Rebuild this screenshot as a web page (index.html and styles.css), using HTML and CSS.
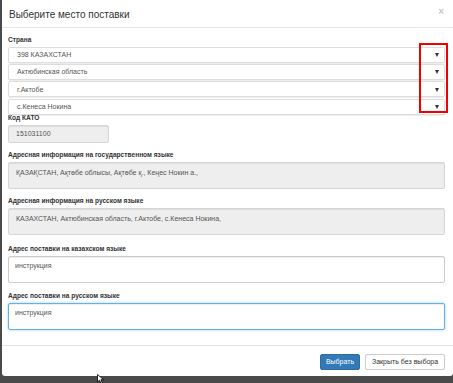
FILE: index.html
```html
<!DOCTYPE html>
<html lang="ru">
<head>
<meta charset="utf-8">
<title>Выберите место поставки</title>
<link rel="stylesheet" href="styles.css">
</head>
<body>
<div class="modal">
  <div class="modal-header">
    <span class="modal-title">Выберите место поставки</span>
    <span class="close">×</span>
  </div>
  <div class="modal-body">
    <div class="group g-country">
      <div class="lbl">Страна</div>
      <div class="selects">
        <div class="select"><span>398 КАЗАХСТАН</span><i class="caret"></i></div>
        <div class="select"><span>Актюбинская область</span><i class="caret"></i></div>
        <div class="select"><span>г.Актобе</span><i class="caret"></i></div>
        <div class="select"><span>с.Кенеса Нокина</span><i class="caret"></i></div>
        <div class="highlight"></div>
      </div>
    </div>
    <div class="group g-kato">
      <div class="lbl">Код КАТО</div>
      <div class="input disabled kato">151031100</div>
    </div>
    <div class="group g-kz">
      <div class="lbl">Адресная информация на государственном языке</div>
      <div class="area disabled">ҚАЗАҚСТАН, Ақтөбе облысы, Ақтөбе қ., Кеңес Нокин а.,</div>
    </div>
    <div class="group g-ru">
      <div class="lbl">Адресная информация на русском языке</div>
      <div class="area disabled">КАЗАХСТАН, Актюбинская область, г.Актобе, с.Кенеса Нокина,</div>
    </div>
    <div class="group g-dkz">
      <div class="lbl">Адрес поставки на казахском языке</div>
      <div class="area">инструкция</div>
    </div>
    <div class="group g-dru">
      <div class="lbl">Адрес поставки на русском языке</div>
      <div class="area focus">инструкция</div>
    </div>
  </div>
  <div class="modal-footer">
    <button class="btn btn-primary">Выбрать</button>
    <button class="btn btn-default">Закрыть без выбора</button>
  </div>
</div>
<svg class="cursor" width="8" height="10" viewBox="0 0 8 10"><path d="M0.5 0.5 L0.5 8 L2.5 6.2 L4 9.3 L5.3 8.7 L3.9 5.7 L6.6 5.7 Z" fill="#fff" stroke="#000" stroke-width="0.8"/></svg>
</body>
</html>
```
FILE: styles.css
```css
html, body {
  margin: 0;
  padding: 0;
}
body {
  width: 453px;
  height: 383px;
  background: #4a4a4a;
  font-family: "Liberation Sans", Arial, sans-serif;
  color: #333;
  position: relative;
  overflow: hidden;
}
.modal {
  margin-left: 2px;
  width: 451px;
  background: #fff;
  border-radius: 0 0 3px 3px;
}
.modal-header {
  height: 27px;
  border-bottom: 1px solid #e5e5e5;
  display: flex;
  align-items: center;
  justify-content: space-between;
  padding: 0 9px 0 7px;
}
.modal-title {
  font-size: 10px;
  color: #333;
  position: relative;
  top: 1px;
}
.close {
  font-size: 10px;
  font-weight: bold;
  color: #c8c8c8;
  line-height: 1;
  position: relative;
  top: -2px;
}
.modal-body {
  padding: 8px 8px 15.5px 6px;
}
.lbl {
  font-size: 6.6px;
  font-weight: bold;
  line-height: 8px;
  margin-bottom: 3px;
  color: #333;
  white-space: nowrap;
}
.group { margin-bottom: 8px; }
.g-country { margin-bottom: 0; }
.g-country .lbl { margin-bottom: 2.7px; }
.g-kz { margin-bottom: 8px; }
.g-ru { margin-bottom: 10px; }
.g-dkz { margin-bottom: 9px; }
.g-dru { margin-bottom: 0; }

.selects {
  position: relative;
  display: flex;
  flex-direction: column;
  gap: 1.3px;
  margin-bottom: -0.5px;
}
.select {
  height: 16px;
  box-sizing: border-box;
  border: 1px solid #ddd;
  border-radius: 2px;
  box-shadow: 0 1px 1px rgba(0,0,0,0.08);
  display: flex;
  align-items: center;
  justify-content: space-between;
  padding: 0 5px 0 8px;
  font-size: 7px;
  color: #555;
  background: #fff;
}
.caret {
  width: 0;
  height: 0;
  border-left: 2.5px solid transparent;
  border-right: 2.5px solid transparent;
  border-top: 4px solid #333;
  margin-top: 1px;
}
.highlight {
  position: absolute;
  left: 411px;
  top: -3.7px;
  width: 29px;
  height: 70px;
  box-sizing: border-box;
  border: 2px solid #f20000;
}
.input, .area {
  box-sizing: border-box;
  border: 1px solid #ccc;
  border-radius: 2px;
  box-shadow: inset 0 1px 1px rgba(0,0,0,0.075);
  font-size: 7px;
  color: #555;
  background: #fff;
  white-space: nowrap;
}
.input.kato {
  width: 101px;
  height: 17.5px;
  line-height: 15.5px;
  padding-left: 7px;
}
.area {
  height: 27px;
  padding: 5px 6px 0 6px;
  line-height: 8px;
}
.disabled {
  background: #eee;
  border-color: #d6d6d6;
}
.area.disabled {
  padding-top: 6px;
  padding-left: 7px;
}
.area.focus {
  border-color: #66afe9;
  box-shadow: inset 0 1px 1px rgba(0,0,0,0.075), 0 0 3px rgba(102,175,233,0.6);
}
.modal-footer {
  border-top: 1px solid #e5e5e5;
  padding: 8px 8px 6px 0;
  display: flex;
  justify-content: flex-end;
  gap: 5px;
}
.btn {
  height: 16px;
  box-sizing: border-box;
  font-family: "Liberation Sans", Arial, sans-serif;
  font-size: 7px;
  border-radius: 2px;
  padding: 0;
  margin: 0;
  line-height: 14px;
}
.btn-primary {
  width: 40px;
  background: #337ab7;
  border: 1px solid #2e6da4;
  color: #fff;
}
.btn-default {
  width: 80px;
  background: #fff;
  border: 1px solid #ccc;
  color: #333;
}
.cursor {
  position: absolute;
  left: 97px;
  top: 374px;
}
```
